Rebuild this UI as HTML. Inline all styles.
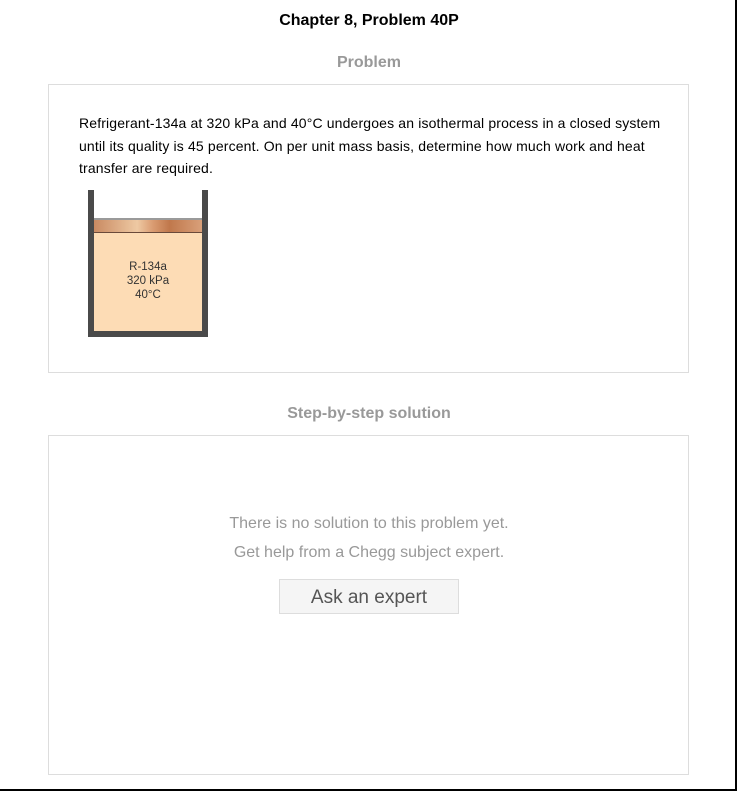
<!DOCTYPE html>
<html><head><style>
body{margin:0;width:738px;height:792px;background:#fff;font-family:"Liberation Sans",Arial,sans-serif;position:relative;overflow:hidden}
.frame{position:absolute;left:0;top:0;width:735px;height:789px;border-right:2px solid #000;border-bottom:2px solid #000}
.a{position:absolute}
.h{left:0;width:738px;text-align:center;font-weight:bold}
.box{border:1px solid #ddd;left:48px;width:639px}
</style></head><body>
<div class="frame"></div>
<div class="a h" style="top:12px;font-size:16px;color:#000">Chapter 8, Problem 40P</div>
<div class="a h" style="top:54px;font-size:16px;color:#999">Problem</div>
<div class="a box" style="top:84px;height:287px"></div>
<div class="a" style="left:79px;top:112px;width:600px;font-size:14px;letter-spacing:0.15px;line-height:22.5px;color:#000">Refrigerant-134a at 320 kPa and 40°C undergoes an isothermal process in a closed system until its quality is 45 percent. On per unit mass basis, determine how much work and heat transfer are required.</div>
<div class="a" style="left:88px;top:190px;width:6px;height:147px;background:#4a4a4a"></div>
<div class="a" style="left:202px;top:190px;width:6px;height:147px;background:#4a4a4a"></div>
<div class="a" style="left:88px;top:331px;width:120px;height:6px;background:#4a4a4a"></div>
<div class="a" style="left:94px;top:218px;width:108px;height:2px;background:#9a9a9a"></div>
<div class="a" style="left:94px;top:220px;width:108px;height:12px;background:linear-gradient(90deg,#c98a62,#eec9a3 40%,#d99a70 55%,#c0784c 70%,#d9a07a);border-bottom:1px solid #6a4a3a"></div>
<div class="a" style="left:94px;top:233px;width:108px;height:98px;background:#fddcb5"></div>
<div class="a" style="left:94px;top:260px;width:108px;text-align:center;font-size:11.5px;line-height:14px;color:#333">R-134a<br>320 kPa<br>40°C</div>
<div class="a h" style="top:405px;font-size:16px;color:#999">Step-by-step solution</div>
<div class="a box" style="top:435px;height:338px"></div>
<div class="a h" style="top:515px;font-size:16px;font-weight:normal;color:#999">There is no solution to this problem yet.</div>
<div class="a h" style="top:544px;font-size:16px;font-weight:normal;color:#999">Get help from a Chegg subject expert.</div>
<div class="a" style="left:279px;top:579px;width:178px;height:33px;border:1px solid #ddd;background:#f5f5f5;text-align:center;line-height:35px;font-size:19px;color:#555">Ask an expert</div>
</body></html>
